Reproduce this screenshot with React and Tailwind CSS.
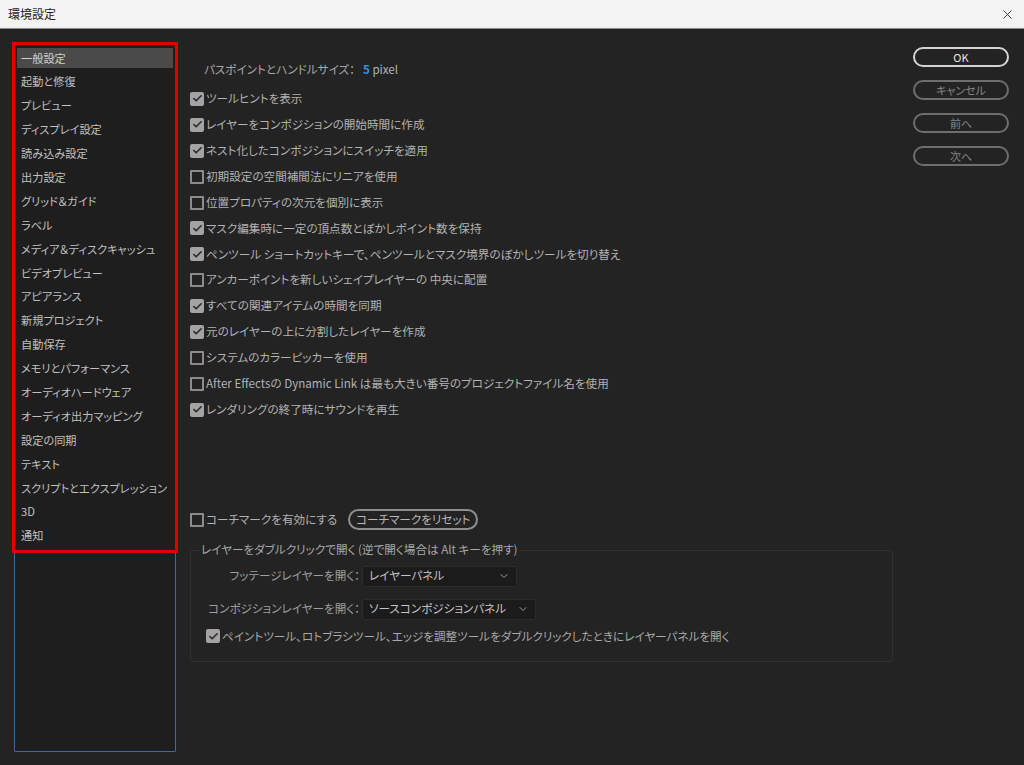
import { ChevronDown, Check, X } from "lucide-react";

const categories = [
  "一般設定",
  "起動と修復",
  "プレビュー",
  "ディスプレイ設定",
  "読み込み設定",
  "出力設定",
  "グリッド＆ガイド",
  "ラベル",
  "メディア＆ディスクキャッシュ",
  "ビデオプレビュー",
  "アピアランス",
  "新規プロジェクト",
  "自動保存",
  "メモリとパフォーマンス",
  "オーディオハードウェア",
  "オーディオ出力マッピング",
  "設定の同期",
  "テキスト",
  "スクリプトとエクスプレッション",
  "3D",
  "通知",
];

const options = [
  { label: "ツールヒントを表示", on: true },
  { label: "レイヤーをコンポジションの開始時間に作成", on: true },
  { label: "ネスト化したコンポジションにスイッチを適用", on: true },
  { label: "初期設定の空間補間法にリニアを使用", on: false },
  { label: "位置プロパティの次元を個別に表示", on: false },
  { label: "マスク編集時に一定の頂点数とぼかしポイント数を保持", on: true },
  { label: "ペンツール ショートカットキーで、ペンツールとマスク境界のぼかしツールを切り替え", on: true },
  { label: "アンカーポイントを新しいシェイプレイヤーの 中央に配置", on: false },
  { label: "すべての関連アイテムの時間を同期", on: true },
  { label: "元のレイヤーの上に分割したレイヤーを作成", on: true },
  { label: "システムのカラーピッカーを使用", on: false },
  { label: "After Effectsの Dynamic Link は最も大きい番号のプロジェクトファイル名を使用", on: false },
  { label: "レンダリングの終了時にサウンドを再生", on: true },
];

const Box = ({ on }) =>
  on ? (
    <span className="w-[14px] h-[14px] shrink-0 rounded-[2px] bg-[#a3a3a3] flex items-center justify-center">
      <Check size={11} strokeWidth={3.5} className="text-[#2a2a2a]" />
    </span>
  ) : (
    <span className="w-[14px] h-[14px] shrink-0 rounded-[1px] border-2 border-[#8c8c8c]" />
  );

const Select = ({ value, width }) => (
  <div
    className={`${width} h-[21px] bg-[#1b1b1b] border border-[#2c2c2c] rounded-[2px] flex items-center justify-between pl-[6px] pr-[6px] text-[#c4c4c4]`}
  >
    <span>{value}</span>
    <ChevronDown size={12} className="text-[#9a9a9a]" />
  </div>
);

const Btn = ({ children, primary }) => (
  <div
    className={`w-[96px] h-[20px] rounded-full border-2 flex items-center justify-center text-[11px] ${
      primary ? "border-[#d4d4d4] text-[#e6e6e6]" : "border-[#6e6e6e] text-[#858585]"
    }`}
  >
    {children}
  </div>
);

export default function App() {
  return (
    <div className="w-[1024px] h-[765px] flex flex-col bg-[#232323] font-['Noto_Sans_CJK_JP','Noto_Sans',sans-serif] [font-feature-settings:'palt'] text-[11.6px] overflow-hidden">
      {/* title bar */}
      <div className="h-[29px] shrink-0 bg-[#f3f3f3] border-b border-[#8a8a8a] flex items-center justify-between pl-[8px] pr-[9px]">
        <span className="text-[12px] text-[#1e1e1e]">環境設定</span>
        <X size={15} strokeWidth={1.5} className="text-[#333]" />
      </div>

      <div className="flex-1 flex pt-[15px] pl-[14px] pr-[15px] pb-[13px]">
        {/* category list */}
        <div className="w-[162px] shrink-0 border border-[#3d6b9a] bg-[#1e1e1e] rounded-[1px]">
          <div className="px-[2px] pt-[1px] pb-[2px] outline-[3px] outline-[#e10000] outline-solid text-[11.2px]">
            {categories.map((c, i) => (
              <div key={c} className="h-[23.9px] py-[2px]">
                <div
                  className={`h-full flex items-center pl-[4px] whitespace-nowrap ${
                    i === 0 ? "bg-[#4a4a4a] text-[#d0d0d0]" : "text-[#c0c0c0]"
                  }`}
                >
                  {c}
                </div>
              </div>
            ))}
          </div>
        </div>

        {/* main settings */}
        <div className="flex-1 flex flex-col pl-[14px] text-[#b2b2b2]">
          <div className="h-[24px] mt-[14px] pl-[14px] flex items-center gap-[8px]">
            <span className="text-[#a8a8a8]">パスポイントとハンドルサイズ：</span>
            <span>
              <span className="text-[#3b8fe0] font-semibold">5</span> pixel
            </span>
          </div>
          <div className="mt-[4px] flex flex-col">
            {options.map((o) => (
              <div key={o.label} className="h-[25.9px] flex items-center gap-[2px]">
                <Box on={o.on} />
                <span>{o.label}</span>
              </div>
            ))}
          </div>

          <div className="mt-[86px] h-[22px] flex items-center">
            <Box on={false} />
            <span className="ml-[2px]">コーチマークを有効にする</span>
            <div className="ml-[11px] w-[130px] h-[21px] rounded-full border-2 border-[#8e8e8e] flex items-center justify-center text-[#b8b8b8]">
              コーチマークをリセット
            </div>
          </div>

          <div className="mt-[19px] w-[703px] h-[112px] border border-[#303030] rounded-[2px] relative flex flex-col">
            <span className="absolute -top-[10px] left-[9px] bg-[#232323] px-[1px] text-[#a8a8a8]">
              レイヤーをダブルクリックで開く (逆で開く場合は Alt キーを押す)
            </span>
            <div className="mt-[15px] flex items-center">
              <span className="w-[171px] text-right pr-[2px] text-[#9e9e9e]">フッテージレイヤーを開く：</span>
              <Select value="レイヤーパネル" width="w-[155px]" />
            </div>
            <div className="mt-[12px] flex items-center">
              <span className="w-[171px] text-right pr-[2px] text-[#9e9e9e]">コンポジションレイヤーを開く：</span>
              <Select value="ソースコンポジションパネル" width="w-[174px]" />
            </div>
            <div className="mt-[8px] pl-[15px] flex items-center gap-[2px] text-[#a8a8a8]">
              <Box on={true} />
              <span>ペイントツール、ロトブラシツール、エッジを調整ツールをダブルクリックしたときにレイヤーパネルを開く</span>
            </div>
          </div>
        </div>

        {/* buttons */}
        <div className="w-[96px] shrink-0 flex flex-col gap-[13px] pt-[3px]">
          <Btn primary>OK</Btn>
          <Btn>キャンセル</Btn>
          <Btn>前へ</Btn>
          <Btn>次へ</Btn>
        </div>
      </div>
    </div>
  );
}
